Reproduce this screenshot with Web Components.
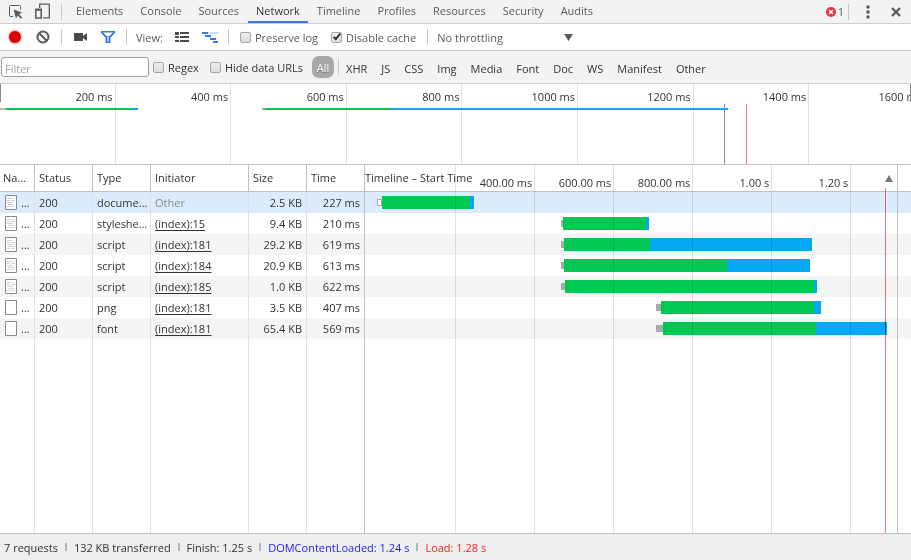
<!DOCTYPE html>
<html lang="en">
<head>
<meta charset="utf-8">
<meta name="viewport" content="width=device-width, initial-scale=1">
<title>Network</title>
<style>
  html, body {
    height: 100%;
    margin: 0;
  }

  body {
    font: 11px/16px "Open Sans", "Noto Sans", sans-serif;
    color: #333;
    background: #fff;
  }
</style>
</head>
<body>
<network-panel></network-panel>

<script>
const define = (name, html, setup) => {
  const template = document.createElement('template')
  template.innerHTML = html

  customElements.define(
    name,
    class extends HTMLElement {
      constructor() {
        super()
        const root = this.attachShadow({ mode: 'open' })
        root.append(template.content.cloneNode(true))
      }

      connectedCallback() {
        if (setup) setup(this, this.shadowRoot)
      }
    }
  )
}

const ICONS = {
  inspect: '<path d="M12.500 5.500V2.500q0-1-1-1h-9q-1 0-1 1v9q0 1 1 1H5" fill="none" stroke="#5a5a5a"/><path d="M5.500 5.500l8.500 3-3 1.700 3.200 3.200-1.300 1.300-3.200-3.200-1.700 3z" fill="#5a5a5a"/>',
  device: '<path d="M4.700 4V.2h9.600v13.600H8" fill="none" stroke="#5a5a5a" stroke-width="1.300"/><path d="M.8 5.500h5.400v8.600H.8z" fill="none" stroke="#5a5a5a" stroke-width="1.500"/><path d="M0 4.700h7v2H0z" fill="#5a5a5a"/>',
  record: '<circle cx="8" cy="8" r="7.500" fill="#f8c8c8"/><circle cx="8" cy="8" r="6" fill="#d80000"/>',
  clear: '<circle cx="8" cy="8" r="5.500" fill="none" stroke="#5a5a5a" stroke-width="2"/><path d="M4 4l8 8" stroke="#5a5a5a" stroke-width="2"/>',
  camera: '<path d="M2 4h9v3l4-3v8l-4-3v3H2z" fill="#4a4a4a"/>',
  filter: '<path d="M1 2h14v2L10.500 8.500V14h-5V8.500L1 4z" fill="#3b78e7"/><path d="M3 3.500h10L9.500 7h-3z" fill="#fff"/><path d="M7 7.500h2v5H7z" fill="#a8c7fa"/>',
  list: '<path d="M1 3h4v3H1zM6 3h9v2H6zM1 7h4v2H1zM6 7h9v2H6zM1 11h4v2H1zM6 11h9v2H6z" fill="#4a4a4a"/>',
  waterfall: '<path d="M6 3h11v2H6z" fill="#d2e1fb"/><path d="M0 3h6v2H0zM3 6h6v2H3zM8 9h6v2H8zM11 12h5v2h-5z" fill="#3b78e7"/>',
  more: '<circle cx="8" cy="3" r="1.700" fill="#555"/><circle cx="8" cy="8" r="1.700" fill="#555"/><circle cx="8" cy="13" r="1.700" fill="#555"/>',
  close: '<path d="M4 4l8 8M12 4l-8 8" stroke="#555" stroke-width="2.200"/>'
}

define('icon-button', `
  <style>
    :host {
      display: flex;
      flex: none;
    }

    button {
      width: 18px;
      height: 18px;
      padding: 0;
      border: 0;
      background: none;
      display: flex;
      align-items: center;
      justify-content: center;
    }

    svg {
      width: 16px;
      height: 16px;
      overflow: visible;
    }
  </style>
  <button type="button"><svg viewBox="0 0 16 16" aria-hidden="true"></svg></button>
`, (host, root) => {
  root.querySelector('svg').innerHTML = ICONS[host.getAttribute('icon')]
  root.querySelector('button').setAttribute('aria-label', host.getAttribute('icon'))
})

define('tool-divider', `
  <style>
    :host {
      display: block;
      flex: none;
      width: 1px;
      height: 16px;
      background: #c6c6c6;
    }
  </style>
`)

define('check-option', `
  <style>
    :host {
      display: block;
      flex: none;
    }

    label {
      display: flex;
      align-items: center;
      gap: 4px;
      white-space: nowrap;
    }

    span {
      padding-top: 2px;
    }

    input {
      appearance: none;
      width: 11px;
      height: 11px;
      margin: 0;
      box-sizing: border-box;
      border: 1px solid #a5a5a5;
      border-radius: 2px;
      background: linear-gradient(#efefef, #dcdcdc);
      display: grid;
      place-items: center;
    }

    input:checked::before {
      content: "";
      width: 6px;
      height: 2px;
      margin-bottom: 3px;
      border: solid #333;
      border-width: 0 0 2px 2px;
      transform: rotate(-50deg);
    }
  </style>
  <label><input type="checkbox"><span><slot></slot></span></label>
`, (host, root) => {
  root.querySelector('input').checked = host.hasAttribute('checked')
})

define('panel-tabs', `
  <style>
    :host {
      display: flex;
      align-items: center;
      height: 23px;
      background: #f3f3f3;
      border-bottom: 1px solid #ccc;
      color: #5a5a5a;
    }

    .tools {
      display: flex;
      align-items: center;
      gap: 9px;
      padding: 0 9px 0 7px;
    }

    nav {
      display: flex;
      align-self: stretch;
      flex: 1;
      gap: 1px;
      margin-left: 6px;
    }

    a {
      padding: 2px 8px 0;
      line-height: 18px;
      color: inherit;
      text-decoration: none;
    }

    a.active {
      color: #333;
      border-bottom: 2px solid #3b78e7;
    }

    .errors {
      display: flex;
      align-items: center;
      gap: 2px;
      margin-right: 4px;
    }

    .errors svg {
      width: 10px;
      height: 10px;
    }

    .menu {
      display: flex;
      gap: 10px;
      padding: 0 6px 0 10px;
    }
  </style>
  <div class="tools">
    <icon-button icon="inspect"></icon-button>
    <icon-button icon="device"></icon-button>
  </div>
  <tool-divider></tool-divider>
  <nav>
    <a href="#elements">Elements</a>
    <a href="#console">Console</a>
    <a href="#sources">Sources</a>
    <a href="#network" class="active">Network</a>
    <a href="#timeline">Timeline</a>
    <a href="#profiles">Profiles</a>
    <a href="#resources">Resources</a>
    <a href="#security">Security</a>
    <a href="#audits">Audits</a>
  </nav>
  <span class="errors">
    <svg viewBox="0 0 10 10" aria-hidden="true">
      <circle cx="5" cy="5" r="5" fill="#e5333b"/>
      <path d="M3 3l4 4M7 3l-4 4" stroke="#fff" stroke-width="1.400"/>
    </svg>
    1
  </span>
  <tool-divider></tool-divider>
  <div class="menu">
    <icon-button icon="more"></icon-button>
    <icon-button icon="close"></icon-button>
  </div>
`)

define('network-toolbar', `
  <style>
    :host {
      display: flex;
      align-items: center;
      height: 26px;
      padding-left: 6px;
      border-bottom: 1px solid #ccc;
      background: #fff;
      color: #5a5a5a;
    }

    .group {
      display: flex;
      align-items: center;
      gap: 10px;
      padding-right: 9px;
    }

    tool-divider + .group {
      padding-left: 9px;
    }

    tool-divider + .options {
      gap: 13px;
      padding: 0 11px;
    }

    .label {
      padding-top: 2px;
    }

    .throttle {
      position: relative;
    }

    select {
      appearance: none;
      width: 136px;
      padding: 2px 0 0;
      border: 0;
      background: none;
      font: inherit;
      color: inherit;
    }

    .throttle svg {
      position: absolute;
      top: 50%;
      right: 9px;
      width: 9px;
      height: 7px;
      margin-top: -3px;
      pointer-events: none;
    }
  </style>
  <div class="group">
    <icon-button icon="record"></icon-button>
    <icon-button icon="clear"></icon-button>
  </div>
  <tool-divider></tool-divider>
  <div class="group">
    <icon-button icon="camera"></icon-button>
    <icon-button icon="filter"></icon-button>
  </div>
  <tool-divider></tool-divider>
  <div class="group">
    <span class="label">View:</span>
    <icon-button icon="list"></icon-button>
    <icon-button icon="waterfall"></icon-button>
  </div>
  <tool-divider></tool-divider>
  <div class="group options">
    <check-option>Preserve log</check-option>
    <check-option checked>Disable cache</check-option>
  </div>
  <tool-divider></tool-divider>
  <div class="group throttle">
    <select aria-label="Throttling"><option>No throttling</option></select>
    <svg viewBox="0 0 9 7" aria-hidden="true"><path d="M0 0h9L4.500 7z" fill="#5a5a5a"/></svg>
  </div>
`)

define('filter-bar', `
  <style>
    :host {
      display: flex;
      align-items: center;
      height: 32px;
      padding: 0 1px;
      gap: 4px;
      border-bottom: 1px solid #ccc;
      background: #f3f3f3;
    }

    input {
      box-sizing: border-box;
      width: 148px;
      height: 20px;
      padding: 3px 3px 0;
      border: 1px solid #a0a0a0;
      border-radius: 3px;
      background: #fff;
      font: inherit;
    }

    input::placeholder {
      color: #a0a0a0;
    }

    .checks {
      display: flex;
      gap: 11px;
      margin-right: 5px;
    }

    .types {
      display: flex;
      align-items: center;
      gap: 14px;
      padding: 3px 0 0 3px;
    }

    button {
      padding: 0;
      border: 0;
      background: none;
      font: inherit;
      color: inherit;
    }

    .all {
      width: 22px;
      height: 22px;
      padding-top: 2px;
      border-radius: 7px;
      background: #a8a8a8;
      color: #fff;
      text-shadow: 0 1px 0 rgba(0, 0, 0, 0.4);
    }
  </style>
  <input type="text" placeholder="Filter" aria-label="Filter">
  <div class="checks">
    <check-option>Regex</check-option>
    <check-option>Hide data URLs</check-option>
  </div>
  <button type="button" class="all">All</button>
  <tool-divider></tool-divider>
  <div class="types">
    <button type="button">XHR</button>
    <button type="button">JS</button>
    <button type="button">CSS</button>
    <button type="button">Img</button>
    <button type="button">Media</button>
    <button type="button">Font</button>
    <button type="button">Doc</button>
    <button type="button">WS</button>
    <button type="button">Manifest</button>
    <button type="button">Other</button>
  </div>
`)

// Overview shows 0 - 1576 ms over the full width
const overviewAt = ms => `${(ms / 1576) * 100}%`

define('time-overview', `
  <style>
    :host {
      display: block;
      position: relative;
      height: 80px;
      overflow: hidden;
      border-bottom: 1px solid #c0c0c0;
    }

    div {
      position: absolute;
    }

    .tick {
      top: 0;
      bottom: 0;
      box-sizing: border-box;
      border-right: 1px solid #e1e1e1;
      padding: 5px 2px 0 0;
      text-align: right;
      white-space: nowrap;
    }

    .bar {
      top: 24px;
      height: 2px;
    }

    .event {
      top: 20px;
      bottom: 0;
      width: 1px;
    }

    .handle {
      top: 0;
      width: 1px;
      height: 18px;
      background: #888;
    }
  </style>
`, (host, root) => {
  const add = (className, style, text = '') => {
    const el = document.createElement('div')
    el.className = className
    el.style.cssText = style
    el.textContent = text
    root.append(el)
  }

  for (let ms = 200; ms <= 1600; ms += 200) {
    add('tick', `left: ${overviewAt(ms - 200)}; width: ${overviewAt(200)}`, `${ms} ms`)
  }

  const bars = [
    [0, 10, '#bbb'],
    [10, 228, '#00c853'],
    [228, 239, '#03a9f4'],
    [453, 459, '#aaa'],
    [459, 675, '#00c853'],
    [675, 1260, '#03a9f4']
  ]
  bars.forEach(([from, to, color]) => {
    add('bar', `left: ${overviewAt(from)}; width: ${overviewAt(to - from)}; background: ${color}`)
  })

  add('event', `left: ${overviewAt(1253)}; background: #7d7df5`)
  add('event', `left: ${overviewAt(1291)}; background: #f57d7d`)
  add('handle', 'left: 0')
  add('handle', 'right: 0')
})

// Waterfall column starts a little before zero
const FALL_START = -28
const FALL_SPAN = 1349
const fallAt = ms => `${((ms - FALL_START) / FALL_SPAN) * 100}%`
const fallWidth = ms => `${(ms / FALL_SPAN) * 100}%`

define('fall-bar', `
  <style>
    :host {
      display: flex;
      align-items: center;
      height: 13px;
    }

    i {
      box-sizing: border-box;
      flex: none;
      height: 13px;
    }

    .wait {
      height: 7px;
      background: #aaa;
    }

    .wait.open {
      border: 1px solid #aaa;
      background: #fff;
    }

    .ttfb { background: #00c853; }
    .load { background: #03a9f4; }
  </style>
  <i class="wait"></i><i class="ttfb"></i><i class="load"></i>
`, (host, root) => {
  const times = host.getAttribute('times').split(' ').map(Number)
  const parts = root.querySelectorAll('i')
  parts[0].style.marginLeft = fallAt(times[0])
  parts.forEach((part, i) => {
    part.style.width = fallWidth(times[i + 1] - times[i])
  })
  parts[0].classList.toggle('open', host.hasAttribute('open'))
})

define('file-icon', `
  <style>
    :host {
      display: block;
      flex: none;
      width: 12px;
      height: 15px;
    }

    svg {
      display: block;
    }
  </style>
  <svg width="12" height="15" viewBox="0 0 12 15" aria-hidden="true">
    <path d="M.5.5h11v14H.5z" fill="#fff" stroke="#8a8a8a"/>
    <path class="lines" d="M2 3.500h5M8 3.500h1M2 5.500h3M6 5.500h4M2 7.500h6M3 9.500h6M2 11.500h3M6 11.500h3" stroke="#d0d0d0"/>
  </svg>
`, (host, root) => {
  if (host.hasAttribute('blank')) root.querySelector('.lines').remove()
})

const REQUESTS = [
  { type: 'docume…', initiator: 'Other', size: '2.5 KB', time: '227 ms', times: '3 16 239 249' },
  { type: 'styleshe…', initiator: '(index):15', size: '9.4 KB', time: '210 ms', times: '469 474 684 692' },
  { type: 'script', initiator: '(index):181', size: '29.2 KB', time: '619 ms', times: '469 477 695 1105' },
  { type: 'script', initiator: '(index):184', size: '20.9 KB', time: '613 ms', times: '469 477 890 1100' },
  { type: 'script', initiator: '(index):185', size: '1.0 KB', time: '622 ms', times: '469 479 1110 1117' },
  { type: 'png', initiator: '(index):181', size: '3.5 KB', time: '407 ms', times: '710 722 1110 1128' },
  { type: 'font', initiator: '(index):181', size: '65.4 KB', time: '569 ms', times: '710 727 1115 1295' }
]

define('request-table', `
  <style>
    :host {
      display: block;
      position: relative;
      flex: 1;
      min-height: 0;
      overflow: hidden;
    }

    table {
      width: 100%;
      height: 100%;
      table-layout: fixed;
      border-spacing: 0;
    }

    col.name { width: 35px; }
    col.text { width: 58px; }
    col.initiator { width: 98px; }
    col.gutter { width: 13px; }

    th, td {
      box-sizing: border-box;
      padding: 0 4px;
      border-right: 1px solid #e1e1e1;
      text-align: left;
      font-weight: normal;
      white-space: nowrap;
      overflow: hidden;
    }

    th {
      height: 27px;
      border-color: #c0c0c0;
      border-bottom: 1px solid #c0c0c0;
    }

    th:nth-child(1), td:nth-child(1) {
      padding: 0 3px;
    }

    th:nth-child(6), td:nth-child(6),
    th:nth-child(7), td:nth-child(7) {
      border-right-color: #c0c0c0;
    }

    th:nth-child(7), td:nth-child(7) {
      padding: 0;
    }

    th:last-child, td:last-child {
      border-right: 0;
    }

    .row td {
      height: 21px;
    }

    .row:nth-child(odd) { background: #f5f5f5; }
    .row:first-child { background: #dcecfd; }

    .file {
      display: flex;
      align-items: center;
      gap: 4px;
      padding-left: 2px;
    }

    .number {
      text-align: right;
    }

    .muted { color: #888; }

    a {
      color: inherit;
      text-underline-offset: 2px;
    }

    .sort {
      display: flex;
      align-items: center;
      justify-content: space-between;
      padding-right: 4px;
    }

    /* grid, scale and load marker lie over the header and the bars */
    .grid {
      position: absolute;
      inset: 0 13px 0 365px;
      pointer-events: none;
      mix-blend-mode: multiply;
    }

    .line {
      position: absolute;
      top: 0;
      bottom: 0;
      box-sizing: border-box;
      border-right: 1px solid #e1e1e1;
      padding: 10px 2px 0 0;
      text-align: right;
      white-space: nowrap;
    }

    .loaded {
      position: absolute;
      top: 23px;
      bottom: 0;
      width: 1px;
      background: #f07878;
    }
  </style>
  <table>
    <colgroup>
      <col class="name"><col class="text"><col class="text"><col class="initiator">
      <col class="text"><col class="text"><col><col class="gutter">
    </colgroup>
    <thead>
      <tr>
        <th>Na…</th>
        <th>Status</th>
        <th>Type</th>
        <th>Initiator</th>
        <th>Size</th>
        <th>Time</th>
        <th>
          <div class="sort">
            <span>Timeline – Start Time</span>
            <svg width="8" height="7" viewBox="0 0 8 7" aria-hidden="true"><path d="M4 0l4 7H0z" fill="#777"/></svg>
          </div>
        </th>
        <th></th>
      </tr>
    </thead>
    <tbody></tbody>
  </table>
  <div class="grid"><div class="loaded"></div></div>
`, (host, root) => {
  const rows = REQUESTS.map((item, i) => `
    <tr class="row">
      <td><div class="file"><file-icon ${i > 4 ? 'blank' : ''}></file-icon>…</div></td>
      <td>200</td>
      <td>${item.type}</td>
      <td>${i ? `<a href="#source">${item.initiator}</a>` : `<span class="muted">${item.initiator}</span>`}</td>
      <td class="number">${item.size}</td>
      <td class="number">${item.time}</td>
      <td><fall-bar times="${item.times}" ${i ? '' : 'open'}></fall-bar></td>
      <td></td>
    </tr>
  `)
  root.querySelector('tbody').innerHTML = rows.join('') + `<tr>${'<td></td>'.repeat(8)}</tr>`

  const labels = ['', '400.00 ms', '600.00 ms', '800.00 ms', '1.00 s', '1.20 s']
  const grid = root.querySelector('.grid')
  labels.forEach((label, i) => {
    const line = document.createElement('div')
    line.className = 'line'
    line.style.left = fallAt(i * 200 + 3)
    line.style.width = fallWidth(200)
    line.textContent = label
    grid.append(line)
  })
  // the first line closes the 0 - 200 ms step
  root.querySelector('.loaded').style.left = fallAt(1289)
})

define('status-bar', `
  <style>
    :host {
      display: flex;
      align-items: center;
      flex: none;
      gap: 7px;
      height: 26px;
      padding: 0 4px;
      border-top: 1px solid #c0c0c0;
      background: #eee;
      white-space: nowrap;
    }

    span {
      padding-top: 2px;
    }

    i {
      width: 2px;
      height: 8px;
      background: #b4b4b4;
    }

    .dom { color: #2222f5; }
    .load { color: #f52222; }
  </style>
  <span>7 requests</span><i></i>
  <span>132 KB transferred</span><i></i>
  <span>Finish: 1.25 s</span><i></i>
  <span class="dom">DOMContentLoaded: 1.24 s</span><i></i>
  <span class="load">Load: 1.28 s</span>
`)

define('network-panel', `
  <style>
    :host {
      display: flex;
      flex-direction: column;
      height: 100%;
      overflow: hidden;
    }

    panel-tabs, network-toolbar, filter-bar, time-overview {
      flex: none;
    }
  </style>
  <panel-tabs></panel-tabs>
  <network-toolbar></network-toolbar>
  <filter-bar></filter-bar>
  <time-overview></time-overview>
  <request-table></request-table>
  <status-bar></status-bar>
`)
</script>
</body>
</html>
